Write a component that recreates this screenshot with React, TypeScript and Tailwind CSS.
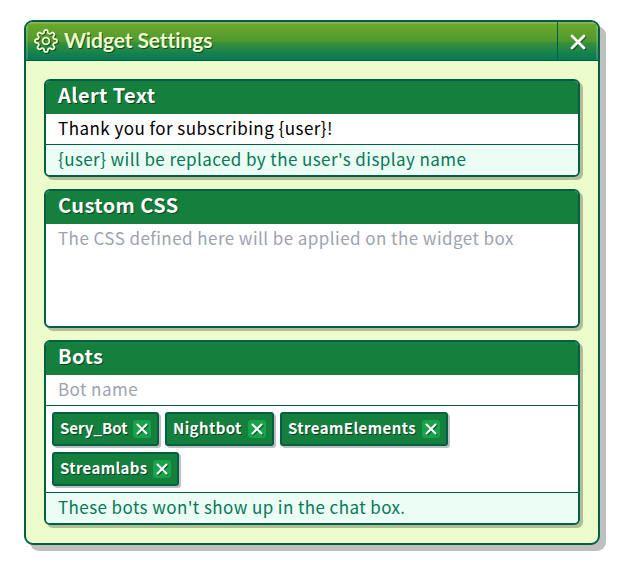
import React from "react";

const shadowText = "[text-shadow:1px_1px_0_rgba(0,0,0,0.5)]";

function Cross({ size, width }: { size: number; width: number }) {
  return (
    <svg width={size} height={size} viewBox="0 0 16 16" fill="none" stroke="white" strokeWidth={width} strokeLinecap="round" className="[filter:drop-shadow(1px_1px_0_rgba(0,0,0,0.45))]">
      <path d="M2 2 14 14M14 2 2 14" />
    </svg>
  );
}

const gearPoints = Array.from({ length: 144 }, (_, i) => {
  const angle = (i * Math.PI) / 72;
  const radius = 9.5 + 1.5 * Math.tanh(2.2 * Math.cos(8 * angle));
  return `${(12 + radius * Math.cos(angle)).toFixed(2)},${(12 + radius * Math.sin(angle)).toFixed(2)}`;
}).join(" ");

function Gear() {
  return (
    <svg width="24" height="24" viewBox="0 0 24 24" fill="none" stroke="#ecfccb" strokeWidth="1.8" strokeLinejoin="round" className="-mt-px [filter:drop-shadow(1px_1px_0_rgba(0,0,0,0.5))]">
      <circle cx="12" cy="12" r="3.4" />
      <polygon points={gearPoints} />
    </svg>
  );
}

function Panel({ title, children }: { title: string; children: React.ReactNode }) {
  return (
    <section className="overflow-hidden rounded-md border-2 border-emerald-800 bg-white shadow-[3px_3px_0_rgba(0,0,0,0.25)]">
      <h2 className={`h-[33px] bg-[#15803d] px-3 text-[20px] leading-[28px] font-bold tracking-[0.4px] text-white ${shadowText}`}>{title}</h2>
      {children}
    </section>
  );
}

function Hint({ children }: { children: React.ReactNode }) {
  return <p className="h-[31px] border-t border-emerald-800 bg-[#ecfdf5] px-3 text-[17px] leading-[28px] tracking-[0.42px] text-[#047857]">{children}</p>;
}

function Tag({ name, width, tracking }: { name: string; width: string; tracking: string }) {
  return (
    <span className={`flex h-[34px] items-center justify-between rounded-[3px] border-2 border-emerald-800 bg-[#15803d] px-1.5 shadow-[2px_2px_0_rgba(0,0,0,0.25)] ${width}`}>
      <span className={`pb-0.5 text-[15px] leading-[28px] font-bold whitespace-nowrap text-white ${tracking} ${shadowText}`}>{name}</span>
      <button className="flex size-[18px] shrink-0 items-center justify-center rounded-[3px] bg-[#16a34a]">
        <Cross size={12} width={2.8} />
      </button>
    </span>
  );
}

export default function App() {
  return (
    <main className="h-[573px] w-[626px] bg-white pt-5 pl-6 font-['Noto_Sans_CJK_JP',sans-serif]">
      <div className="h-[525px] w-[576px] overflow-hidden rounded-[9px] border-2 border-emerald-800 bg-[#ecfccb] shadow-[6px_6px_0_rgba(0,0,0,0.25)]">
        <header className="flex h-[39px] border-b border-emerald-800 bg-[linear-gradient(to_bottom,#70aa2d_0%,#4d982e_53%,#38913a_53%,#047857_100%)]">
          <div className="flex flex-1 items-center gap-1.5 pl-2 shadow-[inset_2px_2px_0_rgba(255,255,255,0.15)]">
            <Gear />
            <h1 className={`pb-0.5 font-['Lato',sans-serif] text-[21px] leading-7 font-bold tracking-[-0.1px] text-[#ecfccb] ${shadowText}`}>Widget Settings</h1>
          </div>
          <button className="flex w-[41px] items-center justify-center border-l border-emerald-800 pt-px shadow-[inset_-2px_2px_0_rgba(255,255,255,0.15)]">
            <Cross size={16} width={2.8} />
          </button>
        </header>
        <div className="flex flex-col gap-3 px-[18px] pt-[18px]">
          <Panel title="Alert Text">
            <div className="h-[30px] px-3 text-[17px] leading-[28px] tracking-[0.46px] text-black">Thank you for subscribing {"{user}"}!</div>
            <Hint>{"{user}"} will be replaced by the user's display name</Hint>
          </Panel>
          <Panel title="Custom CSS">
            <div className="h-[102px] px-3 text-[17px] leading-[28px] tracking-[0.44px] text-[#9ca3af]">The CSS defined here will be applied on the widget box</div>
          </Panel>
          <Panel title="Bots">
            <div className="h-[30px] px-3 text-[17px] leading-[28px] tracking-[0.44px] text-[#9ca3af]">Bot name</div>
            <div className="flex h-[87px] flex-wrap content-start gap-1.5 border-t border-emerald-800 p-1.5">
              <Tag name="Sery_Bot" width="w-[107px]" tracking="tracking-[0px]" />
              <Tag name="Nightbot" width="w-[109px]" tracking="tracking-[0.4px]" />
              <Tag name="StreamElements" width="w-[168px]" tracking="tracking-[0.4px]" />
              <Tag name="Streamlabs" width="w-[127px]" tracking="tracking-[0.35px]" />
            </div>
            <Hint>These bots won't show up in the chat box.</Hint>
          </Panel>
        </div>
      </div>
    </main>
  );
}
